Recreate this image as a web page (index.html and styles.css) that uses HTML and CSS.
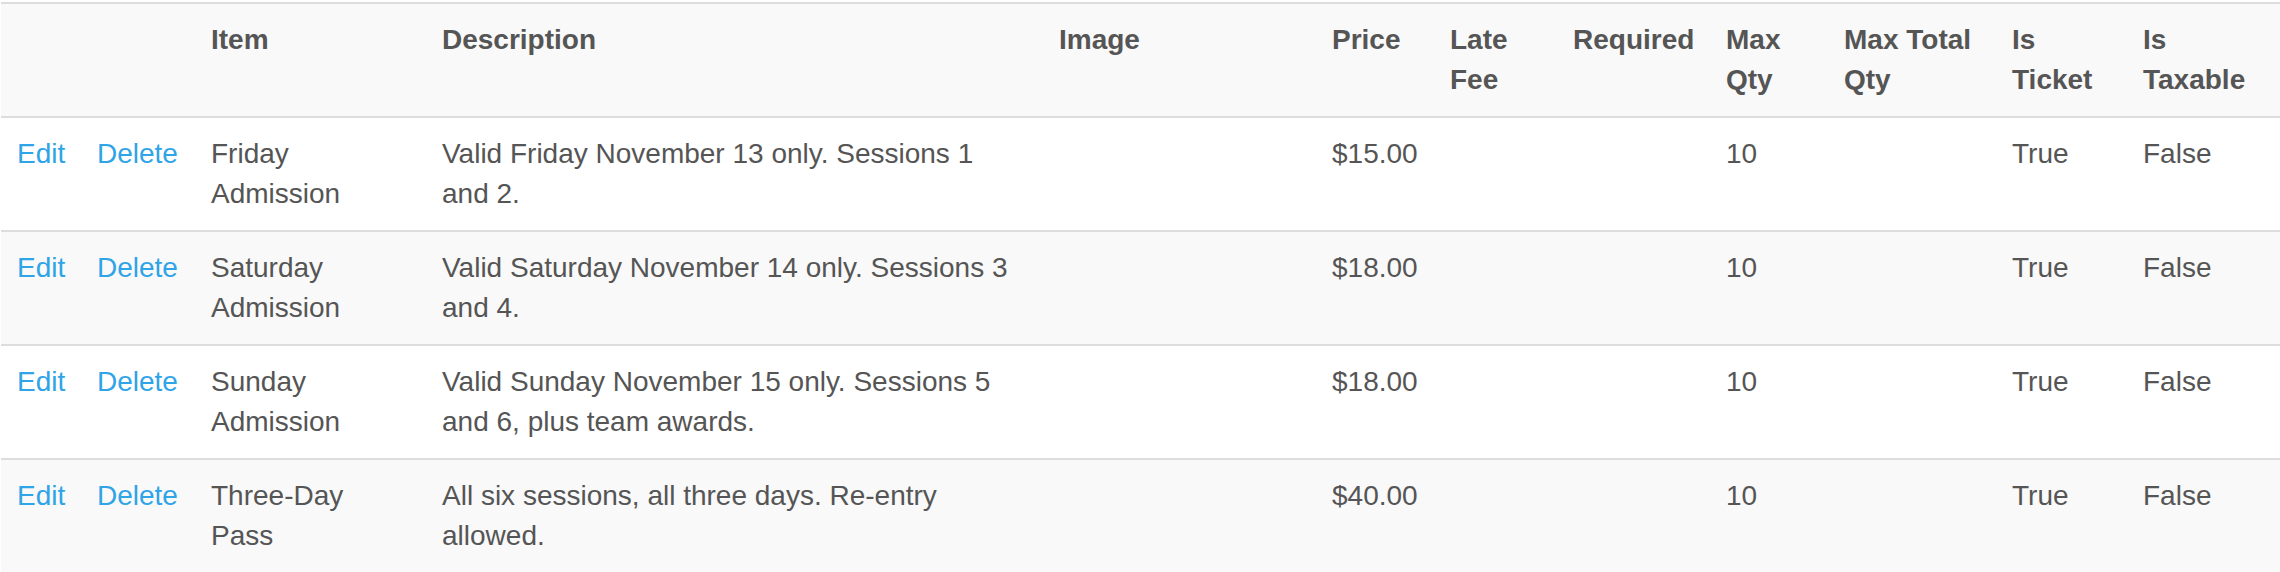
FILE: index.html
```html
<!DOCTYPE html>
<html>
<head>
<meta charset="utf-8">
<link rel="stylesheet" href="styles.css">
</head>
<body>
<table class="items">
  <colgroup>
    <col class="c-edit"><col class="c-del"><col class="c-item"><col class="c-desc"><col class="c-img"><col class="c-price"><col class="c-late"><col class="c-req"><col class="c-max"><col class="c-maxtotal"><col class="c-ticket"><col class="c-tax">
  </colgroup>
  <tbody>
    <tr class="head-row">
      <th></th><th></th><th>Item</th><th>Description</th><th>Image</th><th>Price</th><th>Late Fee</th><th>Required</th><th>Max Qty</th><th>Max Total Qty</th><th>Is Ticket</th><th>Is Taxable</th>
    </tr>
    <tr>
      <td><a href="#">Edit</a></td><td><a href="#">Delete</a></td><td>Friday Admission</td><td>Valid Friday November 13 only. Sessions 1 and 2.</td><td></td><td>$15.00</td><td></td><td></td><td>10</td><td></td><td>True</td><td>False</td>
    </tr>
    <tr>
      <td><a href="#">Edit</a></td><td><a href="#">Delete</a></td><td>Saturday Admission</td><td>Valid Saturday November 14 only. Sessions 3 and 4.</td><td></td><td>$18.00</td><td></td><td></td><td>10</td><td></td><td>True</td><td>False</td>
    </tr>
    <tr>
      <td><a href="#">Edit</a></td><td><a href="#">Delete</a></td><td>Sunday Admission</td><td>Valid Sunday November 15 only. Sessions 5 and 6, plus team awards.</td><td></td><td>$18.00</td><td></td><td></td><td>10</td><td></td><td>True</td><td>False</td>
    </tr>
    <tr>
      <td><a href="#">Edit</a></td><td><a href="#">Delete</a></td><td>Three-Day Pass</td><td>All six sessions, all three days. Re-entry allowed.</td><td></td><td>$40.00</td><td></td><td></td><td>10</td><td></td><td>True</td><td>False</td>
    </tr>
  </tbody>
</table>
</body>
</html>
```
FILE: styles.css
```css
html, body {
  margin: 0;
  padding: 0;
  background: #ffffff;
}
body {
  font-family: "Liberation Sans", Arial, Helvetica, sans-serif;
  font-size: 28px;
  line-height: 40px;
  color: #555555;
  padding-top: 2px;
}
.items {
  border-collapse: collapse;
  border-spacing: 0;
  table-layout: fixed;
  width: 2279px;
  margin-left: 1px;
}
.items th,
.items td {
  padding: 16px;
  vertical-align: top;
  text-align: left;
  border-top: 2px solid #dddddd;
}
.items th {
  font-weight: bold;
}
.items tr:nth-child(odd) {
  background: #f9f9f9;
}
.items a {
  color: #2fa4e7;
  text-decoration: none;
}
.c-edit { width: 80px; }
.c-del { width: 114px; }
.c-item { width: 231px; }
.c-desc { width: 617px; }
.c-img { width: 273px; }
.c-price { width: 118px; }
.c-late { width: 123px; }
.c-req { width: 153px; }
.c-max { width: 118px; }
.c-maxtotal { width: 168px; }
.c-ticket { width: 131px; }
.c-tax { width: 153px; }
```
